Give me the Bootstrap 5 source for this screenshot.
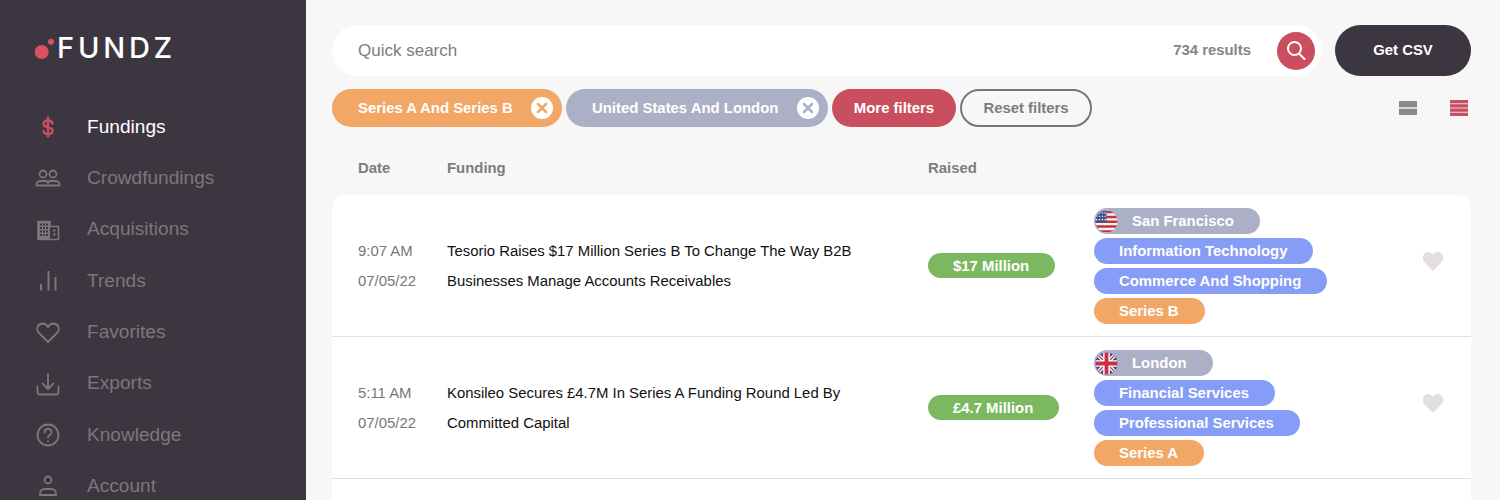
<!DOCTYPE html>
<html lang="en">
<head>
<meta charset="utf-8">
<title>Fundz</title>
<link href="https://cdn.jsdelivr.net/npm/bootstrap@5.3.0/dist/css/bootstrap.min.css" rel="stylesheet">
<style>
html, body { height: 100%; overflow: hidden; }
body { font-family: "Liberation Sans", Arial, sans-serif; background: #f7f7f7; color: #111; }
.fz-shell { height: 500px; overflow: hidden; }
.fz-side { width: 306px; flex: none; background: #3b363f; padding: 0 0 0 35px; }
.fz-logo { flex: none; height: 49px; margin-top: 23px; margin-bottom: 29.500px; }
.fz-side-nav { flex: none; }
.fz-logo-word { font-family: "Inter", sans-serif; font-size: 29px; font-weight: 500; letter-spacing: 3.800px; color: #fff; line-height: 1; }
.fz-nav-item { flex: none; height: 51.300px; font-size: 19.100px; color: #7b777e; text-decoration: none; }
.fz-nav-item.is-on { color: #fff; }
.fz-nav-icon { width: 26px; height: 26px; margin-right: 26px; flex: none; fill: none; stroke: #7b777e; stroke-width: 1.800; stroke-linecap: round; stroke-linejoin: round; }
.fz-nav-item.is-on .fz-nav-icon { stroke: #c94f5f; stroke-width: 2.400; }
.fz-win { fill: #3b363f; stroke: none; }
.fz-main { padding: 25px 29px 0 26px; min-width: 0; }
.fz-search { height: 51px; background: #fff; padding: 0 7px 0 26px; width: 990px; }
.fz-search-label { font-size: 17px; color: #7d7d7d; }
.fz-count { font-size: 14.900px; font-weight: 700; color: #858585; margin-right: 26px; }
.fz-search-btn { width: 38px; height: 38px; background: #c94f5f; }
.fz-csv { width: 136px; height: 51px; background: #3b363f; color: #fff; font-size: 14.900px; font-weight: 700; border: 0; margin-left: 13px; }
.fz-filters { margin-top: 13px; height: 38px; gap: 4px; }
.fz-chip { height: 38px; font-size: 14.900px; font-weight: 700; color: #fff; padding-left: 26px; }
.fz-chip-orange { background: #f2a766; width: 230px; }
.fz-chip-grey { background: #acb0c6; width: 262px; }
.fz-chip-x { width: 22px; height: 22px; background: #fff; margin-right: 9px; }
.fz-btn-more { width: 124px; height: 38px; background: #c94f5f; color: #fff; font-size: 14.900px; font-weight: 700; border: 0; }
.fz-btn-reset { width: 132px; height: 38px; background: transparent; color: #7d7d7d; font-size: 14.900px; font-weight: 700; border: 2px solid #777; }
.fz-view { gap: 33px; padding-right: 3px; }
.fz-head { height: 68px; font-size: 14.900px; font-weight: 700; color: #7d7d7d; padding: 14px 0 0 26px; }
.fz-c-date { width: 89px; flex: none; }
.fz-c-title { width: 481px; flex: none; }
.fz-c-raised { width: 166px; flex: none; }
.fz-c-tags { flex: 1 1 auto; gap: 4px; }
.fz-row { height: 142px; background: #fff; border-bottom: 1px solid #dfdfdf; padding-left: 26px; padding-right: 27px; }
.fz-row-first { border-top-left-radius: 14px; border-top-right-radius: 14px; }
.fz-row-last { border-bottom: 0; }
.fz-date { font-size: 14.900px; line-height: 30px; color: #777; }
.fz-title { font-size: 14.900px; line-height: 30px; color: #111; width: 425px; }
.fz-raised { height: 25px; background: #7cb860; color: #fff; font-size: 14.900px; font-weight: 700; padding: 0 26px 0 25px; line-height: 26px; }
.fz-tag { height: 26px; line-height: 26px; font-size: 14.900px; font-weight: 700; color: #fff; padding: 0 26px 0 25px; }
.fz-tag-blue { background: #859df7; }
.fz-tag-orange { background: #f2a766; }
.fz-tag-city { background: #acb0c6; padding-left: 38px; }
.fz-flag { left: 1px; top: 2px; width: 23px; height: 23px; }
.fz-heart { width: 22px; height: 20px; fill: #e3dedf; flex: none; margin-bottom: 9px; }
</style>
</head>
<body>
<div class="fz-shell d-flex">
  <aside class="fz-side d-flex flex-column">
    <div class="fz-logo d-flex align-items-center">
      <svg width="22" height="24" viewBox="0 0 22 24"><circle cx="6.700" cy="16" r="7" fill="#d9515f"/><circle cx="16" cy="5.800" r="3" fill="#d9515f"/></svg>
      <span class="fz-logo-word">FUNDZ</span>
    </div>
    <nav class="fz-side-nav d-flex flex-column">
      <a class="fz-nav-item is-on d-flex align-items-center" href="#">
        <svg class="fz-nav-icon" viewBox="0 0 26 26"><path d="M17.500 9.500C17.200 7.500 15.500 6.500 13 6.500c-2.700 0-4.500 1.300-4.500 3.300 0 2.200 2 3 4.500 3.500s4.500 1.300 4.500 3.500c0 2-1.800 3.300-4.500 3.300-2.500 0-4.200-1-4.500-3M13 3.500v19"/></svg>Fundings
      </a>
      <a class="fz-nav-item d-flex align-items-center" href="#">
        <svg class="fz-nav-icon" viewBox="0 0 26 26"><circle cx="8" cy="9" r="3.500"/><circle cx="18" cy="9" r="3.500"/><path d="M1.500 20.500v-1c0-2 2-3.500 4-3.500h5c1.500 0 2.500.7 2.500 2 0-1.300 1-2 2.500-2h5c2 0 4 1.500 4 3.500v1z"/></svg>Crowdfundings
      </a>
      <a class="fz-nav-item d-flex align-items-center" href="#">
        <svg class="fz-nav-icon" viewBox="0 0 26 26"><path stroke-width="1.600" d="M3 22.500V4.500h12v5h8.500v13z"/><path fill="#7b777e" stroke="none" d="M3 4.500h12v18H3z"/><path class="fz-win" d="M5 6.500h2v2H5zM8 6.500h2v2H8zM11 6.500h2v2h-2zM5 10h2v2H5zM8 10h2v2H8zM11 10h2v2h-2zM5 13.500h2v2H5zM8 13.500h2v2H8zM11 13.500h2v2h-2zM5 17h2v2H5zM8 17h2v2H8zM11 17h2v2h-2z"/><path stroke-width="1.800" stroke-linecap="butt" d="M18 13.500h2.500M18 17.500h2.500"/></svg>Acquisitions
      </a>
      <a class="fz-nav-item d-flex align-items-center" href="#">
        <svg class="fz-nav-icon" viewBox="0 0 26 26"><path stroke-width="2" stroke-linecap="butt" d="M6 16v6.500M13.500 3v19.500M20.500 9v13.500"/></svg>Trends
      </a>
      <a class="fz-nav-item d-flex align-items-center" href="#">
        <svg class="fz-nav-icon" viewBox="0 0 26 26"><path d="M13 23 3.500 13.500C1 10.500 2 5 7.500 4.500c2.500 0 4.500 1.500 5.500 3.500 1-2 3-3.500 5.500-3.500C24 5 25 10.500 22.500 13.500z"/></svg>Favorites
      </a>
      <a class="fz-nav-item d-flex align-items-center" href="#">
        <svg class="fz-nav-icon" viewBox="0 0 26 26"><path d="M13 3v15M7.500 12.500l5.500 5.500 5.500-5.500M2.500 15.500v5.500c0 1.500 1 2.500 2.500 2.500h16c1.500 0 2.500-1 2.500-2.500v-5.500"/></svg>Exports
      </a>
      <a class="fz-nav-item d-flex align-items-center" href="#">
        <svg class="fz-nav-icon" viewBox="0 0 26 26"><circle cx="13" cy="13" r="10.500"/><path d="M9.500 10.500c0-2 1.500-3.500 3.500-3.500s3.500 1.400 3.500 3.300c0 2.700-3.500 2.700-3.500 5.200M13 18.800v.2"/></svg>Knowledge
      </a>
      <a class="fz-nav-item d-flex align-items-center" href="#">
        <svg class="fz-nav-icon" viewBox="0 0 26 26"><circle cx="13" cy="7" r="3.500"/><path d="M5 22v-1.500c0-2.500 2-4.500 4.500-4.500h7c2.500 0 4.500 2 4.500 4.500V22z"/></svg>Account
      </a>
    </nav>
  </aside>

  <main class="fz-main flex-grow-1">
    <div class="d-flex">
      <div class="fz-search rounded-pill d-flex align-items-center">
        <span class="fz-search-label flex-grow-1">Quick search</span>
        <span class="fz-count">734 results</span>
        <span class="fz-search-btn rounded-circle d-flex align-items-center justify-content-center">
          <svg width="22" height="22" viewBox="0 0 22 22" fill="none" stroke="#fff" stroke-width="2" stroke-linecap="round"><circle cx="9.500" cy="8.500" r="6.500"/><path d="m14 13.500 5.500 5.500"/></svg>
        </span>
      </div>
      <button class="fz-csv btn rounded-pill p-0" type="button">Get CSV</button>
    </div>

    <div class="fz-filters d-flex align-items-center">
      <div class="fz-chip fz-chip-orange rounded-pill d-flex align-items-center justify-content-between">
        <span>Series A And Series B</span>
        <span class="fz-chip-x rounded-circle d-flex align-items-center justify-content-center"><svg width="12" height="12" viewBox="0 0 12 12" stroke="#f2a766" stroke-width="2.600" stroke-linecap="round"><path d="m2 2 8 8M10 2l-8 8"/></svg></span>
      </div>
      <div class="fz-chip fz-chip-grey rounded-pill d-flex align-items-center justify-content-between">
        <span>United States And London</span>
        <span class="fz-chip-x rounded-circle d-flex align-items-center justify-content-center"><svg width="12" height="12" viewBox="0 0 12 12" stroke="#acb0c6" stroke-width="2.600" stroke-linecap="round"><path d="m2 2 8 8M10 2l-8 8"/></svg></span>
      </div>
      <button class="fz-btn-more btn rounded-pill p-0" type="button">More filters</button>
      <button class="fz-btn-reset btn rounded-pill p-0" type="button">Reset filters</button>
      <div class="fz-view ms-auto d-flex align-items-center">
        <svg width="18" height="14" viewBox="0 0 18 14" fill="#8a8a8a"><rect width="18" height="6.300"/><rect y="7.700" width="18" height="6.300"/></svg>
        <svg width="18" height="16" viewBox="0 0 18 16" fill="#c94f5f"><rect width="18" height="3.400"/><rect y="4.200" width="18" height="3.400"/><rect y="8.400" width="18" height="3.400"/><rect y="12.600" width="18" height="3.400"/></svg>
      </div>
    </div>

    <div class="fz-head d-flex align-items-center">
      <div class="fz-c-date">Date</div>
      <div class="fz-c-title">Funding</div>
      <div class="fz-c-raised">Raised</div>
    </div>

    <div class="fz-row fz-row-first d-flex align-items-center">
      <div class="fz-c-date fz-date">9:07 AM<br>07/05/22</div>
      <div class="fz-c-title"><div class="fz-title">Tesorio Raises $17 Million Series B To Change The Way B2B Businesses Manage Accounts Receivables</div></div>
      <div class="fz-c-raised d-flex"><span class="fz-raised rounded-pill">$17 Million</span></div>
      <div class="fz-c-tags d-flex flex-column align-items-start">
        <span class="fz-tag fz-tag-city rounded-pill position-relative">
          <svg class="fz-flag position-absolute" viewBox="0 0 24 24"><defs><clipPath id="cu"><circle cx="12" cy="12" r="11.500"/></clipPath></defs><g clip-path="url(#cu)"><rect width="24" height="24" fill="#f4f4f6"/><path fill="#c8303f" d="M0 1h24v2.500H0zM0 6h24v2.500H0zM0 11h24v2.500H0zM0 16h24v2.500H0zM0 21h24v2.500H0z"/><rect width="12" height="13" fill="#3f4f94"/><path stroke="#fff" stroke-width="1.200" stroke-dasharray="1.500 1.500" d="M1 3h11M1 6.500h11M1 10h11"/></g></svg>San Francisco
        </span>
        <span class="fz-tag fz-tag-blue rounded-pill">Information Technology</span>
        <span class="fz-tag fz-tag-blue rounded-pill">Commerce And Shopping</span>
        <span class="fz-tag fz-tag-orange rounded-pill">Series B</span>
      </div>
      <svg class="fz-heart" viewBox="0 0 24 22"><path d="M12 22 2.500 12.500C-1 8.500 1 1.500 6.500 1c2.500 0 4.500 1.200 5.500 3 1-1.800 3-3 5.500-3 5.500.5 7.500 7.500 4 11.500z"/></svg>
    </div>

    <div class="fz-row d-flex align-items-center">
      <div class="fz-c-date fz-date">5:11 AM<br>07/05/22</div>
      <div class="fz-c-title"><div class="fz-title">Konsileo Secures £4.7M In Series A Funding Round Led By Committed Capital</div></div>
      <div class="fz-c-raised d-flex"><span class="fz-raised rounded-pill">£4.7 Million</span></div>
      <div class="fz-c-tags d-flex flex-column align-items-start">
        <span class="fz-tag fz-tag-city rounded-pill position-relative">
          <svg class="fz-flag position-absolute" viewBox="0 0 24 24"><defs><clipPath id="cg"><circle cx="12" cy="12" r="11.500"/></clipPath></defs><g clip-path="url(#cg)"><rect width="24" height="24" fill="#2f4a8f"/><path stroke="#fff" stroke-width="4" d="M0 0l24 24M24 0 0 24"/><path stroke="#c8303f" stroke-width="1.400" d="M0 0l24 24M24 0 0 24"/><path stroke="#fff" stroke-width="7" d="M12 0v24M0 12h24"/><path stroke="#c8303f" stroke-width="4" d="M12 0v24M0 12h24"/></g></svg>London
        </span>
        <span class="fz-tag fz-tag-blue rounded-pill">Financial Services</span>
        <span class="fz-tag fz-tag-blue rounded-pill">Professional Services</span>
        <span class="fz-tag fz-tag-orange rounded-pill">Series A</span>
      </div>
      <svg class="fz-heart" viewBox="0 0 24 22"><path d="M12 22 2.500 12.500C-1 8.500 1 1.500 6.500 1c2.500 0 4.500 1.200 5.500 3 1-1.800 3-3 5.500-3 5.500.5 7.500 7.500 4 11.500z"/></svg>
    </div>
    <div class="fz-row fz-row-last"></div>
  </main>
</div>
<script src="https://cdn.jsdelivr.net/npm/bootstrap@5.3.0/dist/js/bootstrap.bundle.min.js"></script>
</body>
</html>
